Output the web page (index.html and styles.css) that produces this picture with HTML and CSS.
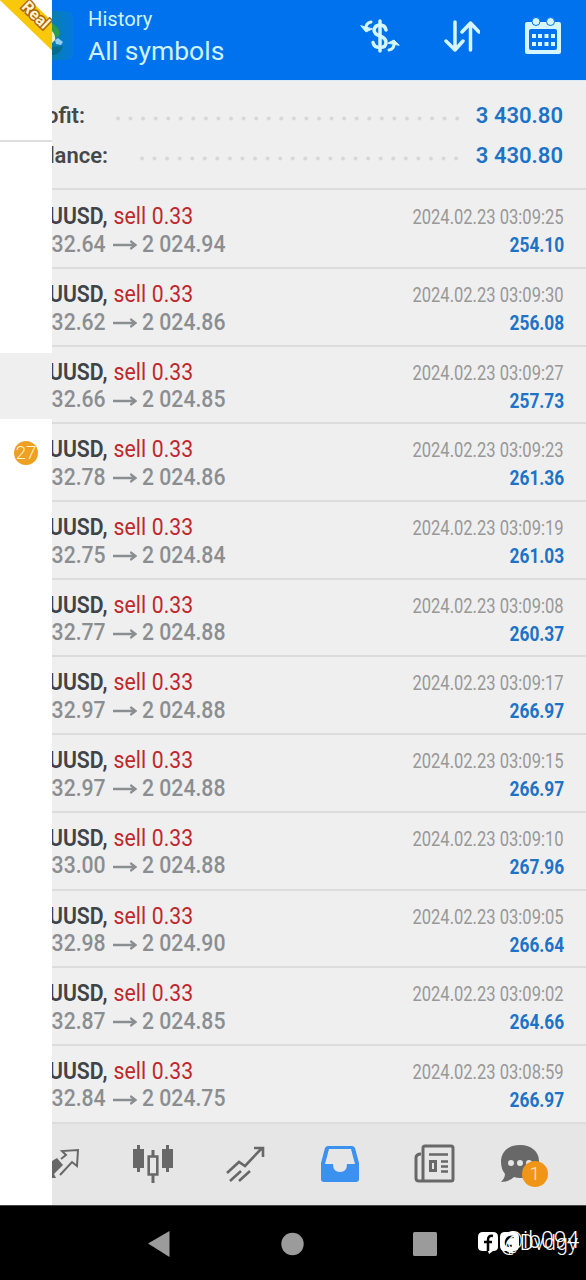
FILE: index.html
```html
<!doctype html>
<html lang="en">
<head>
    <meta charset="UTF-8">
    <meta name="viewport" content="width=device-width, initial-scale=1.0">
    <title>History</title>
    <link rel="stylesheet" href="styles.css">
</head>
<body>
<div class="screen">
    <aside class="drawer">
        <div class="drawer__account">
            <span class="drawer__ribbon">Real</span>
        </div>
        <div class="drawer__list"></div>
        <div class="drawer__active"></div>
        <div class="drawer__item"><span class="drawer__badge">27</span></div>
    </aside>
    <main class="main">
        <header class="header">
            <svg class="header__logo" viewBox="0 0 22 50">
                <defs>
                    <linearGradient id="logo" x1="0" y1="0" x2="1" y2="0">
                        <stop offset="0" stop-color="#087fae"/>
                        <stop offset="1" stop-color="#0578e2"/>
                    </linearGradient>
                </defs>
                <path d="M0 0h13q9 0 9 9v31q0 9-9 9H0z" fill="url(#logo)"/>
                <path d="M0 12q7 4 8 11l-3 4-5-6z" fill="#2f9a4c"/>
                <path d="M0 20q4 4 3 9l-3 3z" fill="#f3f0c4"/>
                <path d="M3 29l3-2 5 4-2 3-5-1z" fill="#8fd0f2"/>
                <path d="M0 36l11-1q-3 9-11 9z" fill="#076d8f"/>
            </svg>
            <div class="header__titles">
                <h1 class="header__title">History</h1>
                <p class="header__subtitle">All symbols</p>
            </div>
            <div class="header__actions">
                <svg class="header__icon" width="40" height="36" viewBox="0 0 40 36" fill="none" stroke="#d5f6fc" stroke-width="3.500" stroke-linecap="round">
                    <path d="M20 3v30"/>
                    <path d="M26 12q-1-5-6-5t-6 5q0 4 6 6t6 6.500q0 5-6 5t-7-5"/>
                    <path d="M11 4q-5 1-5 6" stroke-width="3"/>
                    <path d="M1 8l5 6 6-3z" fill="#d5f6fc" stroke-width="1"/>
                    <path d="M29 32q5-1 5-6" stroke-width="3"/>
                    <path d="M39 27l-5-5-6 3z" fill="#d5f6fc" stroke-width="1"/>
                </svg>
                <svg class="header__icon" width="36" height="32" viewBox="0 0 36 32" fill="none" stroke="#d5f6fc" stroke-width="3.500" stroke-linecap="round" stroke-linejoin="round">
                    <path d="M11 2v28M2 21l9 9 8-9M26.500 30V3M18 12l8.500-9 8.500 9"/>
                </svg>
                <svg class="header__icon" width="38" height="38" viewBox="0 0 38 38" fill="#d5f6fc">
                    <path fill-rule="evenodd" d="M3 5h32q2 0 2 2v28q0 2-2 2H3q-2 0-2-2V7q0-2 2-2zm4 7q-2 0-2 2v17q0 2 2 2h24q2 0 2-2V14q0-2-2-2z"/>
                    <circle cx="12" cy="4.500" r="4" stroke="#0172ee"/>
                    <circle cx="26.500" cy="4.500" r="4" stroke="#0172ee"/>
                    <path d="M8 17h4v4H8zM14 17h4v4h-4zM20.500 17h4v4h-4zM27 17h4v4h-4zM8 25h4v4H8zM14 25h4v4h-4zM20.500 25h4v4h-4zM27 25h4v4h-4z"/>
                </svg>
            </div>
        </header>
        <section class="summary">
            <div class="summary__row">
                <span class="summary__label">ofit:</span>
                <span class="summary__dots"></span>
                <span class="summary__value">3 430.80</span>
            </div>
            <div class="summary__row summary__row--balance">
                <span class="summary__label">lance:</span>
                <span class="summary__dots"></span>
                <span class="summary__value">3 430.80</span>
            </div>
        </section>
        <ul class="deals"></ul>
        <nav class="tabs">
            <svg class="tabs__icon tabs__icon--quotes" width="28" height="36" viewBox="0 0 28 36" fill="none" stroke="#686868" stroke-width="2">
                <path d="M9 13l5-4-4-4 16-1-1 16-5-4L8 29"/>
                <path d="M0 15l5-3 6 7-5 5-4 4 2 4H0z" fill="#686868" stroke="none"/>
            </svg>
            <svg class="tabs__icon" width="40" height="40" viewBox="0 0 40 40" fill="#686868">
                <path d="M4 1h3v4h4v19H7v4H4v-4H0V5h4zM33 1h3v4h4v19h-4v4h-3v-4h-4V5h4zM18.500 6h3v6h-3zM18.500 31h3v8h-3z"/>
                <path d="M15.700 12.500h8.600v18h-8.600z" fill="none" stroke="#686868" stroke-width="2.600"/>
            </svg>
            <svg class="tabs__icon" width="40" height="38" viewBox="0 0 40 38" fill="none" stroke="#686868" stroke-width="2.600">
                <path d="M1 28l12-11 6 4L36 3M28 3h9v9M4 36l11-10M13 36l11-10"/>
            </svg>
            <svg class="tabs__icon" width="40" height="38" viewBox="0 0 40 38">
                <path fill-rule="evenodd" fill="#3a91ef" d="M8 1h24q2 0 3 2l4 15v16q0 3-3 3H4q-3 0-3-3V18L5 3q1-2 3-2zm1 3L5 19h8q0 8 7 8t7-8h8L31 4z"/>
            </svg>
            <svg class="tabs__icon" width="42" height="40" viewBox="0 0 42 40" fill="none" stroke="#686868" stroke-width="3">
                <path d="M9 37V4q0-2 2-2h26q2 0 2 2v31q0 2-2 2H5q-3 0-3-3V14q0-4 5-4"/>
                <path d="M15 10.500h19M27 17.500h7M27 22.500h7M27 27.500h7" stroke-width="2.500"/>
                <path d="M16.500 17.500h5v9h-5z"/>
            </svg>
            <div class="tabs__chat">
                <svg width="40" height="40" viewBox="0 0 40 40">
                    <path fill="#686868" d="M20 1c12 0 19 7 19 16s-7 17-19 17q-3 0-6-1-5 5-13 5 4-4 4-8-4-5-4-12C1 8 8 1 20 1z"/>
                    <path fill="#e6e6e6" d="M8 19a3 3 0 1 1 6 0 3 3 0 1 1-6 0M17 19a3 3 0 1 1 6 0 3 3 0 1 1-6 0M26 19a3 3 0 1 1 6 0 3 3 0 1 1-6 0"/>
                </svg>
                <span class="tabs__badge">1</span>
            </div>
        </nav>
    </main>
</div>
<footer class="system">
    <svg width="24" height="28" viewBox="0 0 24 28"><path d="M1 13.500L22.500 1v26z" fill="#9b9b9b"/></svg>
    <svg width="24" height="24" viewBox="0 0 24 24"><circle cx="12.500" cy="12" r="11.200" fill="#9b9b9b"/></svg>
    <svg width="24" height="24" viewBox="0 0 24 24"><rect width="24" height="24" rx="1.500" fill="#9b9b9b"/></svg>
    <div class="watermark">
        <svg width="42" height="24" viewBox="0 0 42 24">
            <path fill="#fff" d="M5 1h10q5 0 5 5v10q0 4-5 4l-4 3-1-3H5q-5 0-5-4V6q0-5 5-5zM27 1h9q5 0 5 5v9q0 5-5 5l-5 3v-3h-4q-5 0-5-5V6q0-5 5-5z"/>
            <path fill="none" stroke="#000" stroke-width="2.500" d="M15 5q-5-1-5 4v11M6 11h8M36 6q-6-1-8 4t6 5"/>
        </svg>
        <span class="watermark__name">@ib094</span>
        <span class="watermark__name watermark__name--second">@Dvdgy</span>
    </div>
</footer>
<script>
    (() => {
        const deals = [
            ['32.64', '2 024.94', '03:09:25', '254.10'],
            ['32.62', '2 024.86', '03:09:30', '256.08'],
            ['32.66', '2 024.85', '03:09:27', '257.73'],
            ['32.78', '2 024.86', '03:09:23', '261.36'],
            ['32.75', '2 024.84', '03:09:19', '261.03'],
            ['32.77', '2 024.88', '03:09:08', '260.37'],
            ['32.97', '2 024.88', '03:09:17', '266.97'],
            ['32.97', '2 024.88', '03:09:15', '266.97'],
            ['33.00', '2 024.88', '03:09:10', '267.96'],
            ['32.98', '2 024.90', '03:09:05', '266.64'],
            ['32.87', '2 024.85', '03:09:02', '264.66'],
            ['32.84', '2 024.75', '03:08:59', '266.97'],
        ];

        document.querySelector('.deals').innerHTML = deals.map(([open, close, time, profit]) => `
            <li class="deal">
                <div class="deal__info">
                    <p class="deal__symbol"><b>UUSD,</b> <span class="deal__side">sell 0.33</span></p>
                    <p class="deal__price"><span class="deal__open">${open}</span><svg class="deal__arrow" width="28" height="12" viewBox="0 0 28 12"><path d="M0 6h26M20 2l6 4-6 4" fill="none" stroke="#8b8e91" stroke-width="2.500"/></svg><span class="deal__close">${close}</span></p>
                </div>
                <div class="deal__result">
                    <time class="deal__time">2024.02.23 ${time}</time>
                    <b class="deal__profit">${profit}</b>
                </div>
            </li>`).join('');
    })();
</script>
</body>
</html>
```
FILE: styles.css
```css
* {
    box-sizing: border-box;
}

body {
    margin: 0;
    height: 1280px;
    overflow: hidden;
    background: #fff;
    font-family: Roboto, "Liberation Sans", sans-serif;
}

h1,
p,
ul {
    margin: 0;
    padding: 0;
}

svg {
    display: block;
    flex-shrink: 0;
}

.screen {
    display: flex;
    height: 1205px;
}

/* the drawer hides the left edge of the page */
.drawer {
    width: 52px;
    flex-shrink: 0;
    position: relative;
    z-index: 1;
    background: #fff;
}

.drawer__account {
    position: relative;
    height: 142px;
    border-bottom: 2px solid #dedede;
    overflow: hidden;
}

.drawer__ribbon {
    position: absolute;
    top: 10px;
    left: -24px;
    width: 120px;
    height: 21px;
    padding-right: 8px;
    line-height: 14px;
    text-align: center;
    transform: rotate(44deg);
    background: #f9c80a;
    color: #fff4cf;
    font-size: 16px;
    font-weight: 700;
    -webkit-text-stroke: 3px #ae660c;
    paint-order: stroke fill;
}

.drawer__list {
    height: 211px;
}

.drawer__active {
    height: 66px;
    background: #efefef;
}

.drawer__item {
    display: flex;
    padding: 22px 0 0 14px;
}

.drawer__badge {
    width: 24px;
    height: 24px;
    border-radius: 50%;
    background: #eea022;
    color: #fff2cf;
    font-size: 18.5px;
    font-weight: 300;
    line-height: 24px;
    text-align: center;
}

.main {
    flex: 1;
    min-width: 0;
    display: flex;
    flex-direction: column;
    background: #efefef;
}

.header {
    display: flex;
    height: 80px;
    flex-shrink: 0;
    background: #0172ee;
    color: #cff3fc;
}

.header__logo {
    width: 22px;
    height: 50px;
    margin-top: 11px;
}

.header__titles {
    margin-left: 14px;
    padding-top: 6px;
}

.header__title {
    font-size: 20.2px;
    font-weight: 400;
    line-height: 26px;
}

.header__subtitle {
    font-size: 26.5px;
    line-height: 38px;
}

.header__actions {
    flex: 1;
    display: flex;
    align-items: center;
    justify-content: flex-end;
    gap: 44px;
    padding: 0 24px 8px 0;
}

.summary {
    height: 110px;
    flex-shrink: 0;
    padding: 14px 23px 0 0;
    border-top: 1px solid #dbe8f5;
    border-bottom: 2px solid #dcdcdc;
}

.summary__row {
    display: flex;
    align-items: center;
    height: 40px;
    font-size: 22px;
    font-weight: 500;
    color: #45484b;
}

.summary__label {
    display: flex;
    justify-content: flex-end;
    width: 33px;
    font-weight: 600;
}

.summary__dots {
    width: 352px;
    height: 5px;
    margin: 7px 0 0 27px;
    background: radial-gradient(circle at 6px 2.5px, #d6d6d6 1.4px, transparent 2.4px) 0 0 / 12.57px 5px;
}

.summary__row--balance .summary__label {
    width: 56px;
}

.summary__row--balance .summary__dots {
    width: 327px;
    margin-left: 28px;
}

.summary__value {
    margin-left: auto;
    color: #1c73c7;
    font-weight: 600;
}

.deals {
    list-style: none;
}

.deal {
    display: flex;
    justify-content: space-between;
    height: 77.7px;
    padding: 11px 22px 0 0;
    border-bottom: 2px solid #dcdcdc;
}

.deal:first-child {
    height: 79px;
    padding-top: 12px;
}

.deal__info {
    width: 260px;
    margin-left: -3px;
    transform: scaleX(0.865);
    transform-origin: left;
    font-size: 24.5px;
    line-height: 28px;
    white-space: nowrap;
}

.deal__symbol {
    color: #404347;
}

.deal__symbol b {
    font-weight: 600;
}

.deal__side {
    margin-left: 1px;
    color: #c1272d;
    letter-spacing: 0.1px;
}

.deal__price {
    display: flex;
    align-items: center;
    height: 27px;
    padding-left: 3px;
    color: #8b8e91;
    font-weight: 500;
}

.deal__arrow {
    margin: 3px 6px 0 8px;
}

.deal__result {
    display: flex;
    flex-direction: column;
    align-items: flex-end;
    font-size: 20px;
    line-height: 28px;
    white-space: nowrap;
}

.deal__time {
    padding-top: 1px;
    color: #989898;
    transform: scaleX(0.828);
    transform-origin: right;
}

.deal__profit {
    color: #1c73c7;
    transform: scaleX(0.865);
    transform-origin: right;
}

.tabs {
    flex: 1;
    display: flex;
    align-items: center;
    gap: 53.7px;
    background: #e6e6e6;
}

.tabs__icon--quotes {
    margin-right: -1px;
}

.tabs__chat {
    position: relative;
    margin-left: -9.7px;
}

.tabs__badge {
    position: absolute;
    top: 17px;
    left: 22px;
    width: 26px;
    height: 26px;
    border-radius: 50%;
    background: #f19516;
    color: #fff2cf;
    font-size: 19px;
    font-weight: 300;
    line-height: 26px;
    text-align: center;
}

.system {
    position: relative;
    display: flex;
    align-items: center;
    height: 75px;
    padding: 2px 0 0 147px;
    gap: 109px;
    border-top: 1px solid #444;
    background: #000;
}

/* two signatures stamped over each other */
.watermark {
    position: absolute;
    top: 25px;
    left: 478px;
    color: #fff;
}

.watermark__name {
    position: absolute;
    top: -2px;
    left: 24px;
    font-size: 23px;
    font-weight: 300;
    line-height: 24px;
}

.watermark__name--second {
    top: 0;
    left: 22px;
    font-size: 21.5px;
}
```
